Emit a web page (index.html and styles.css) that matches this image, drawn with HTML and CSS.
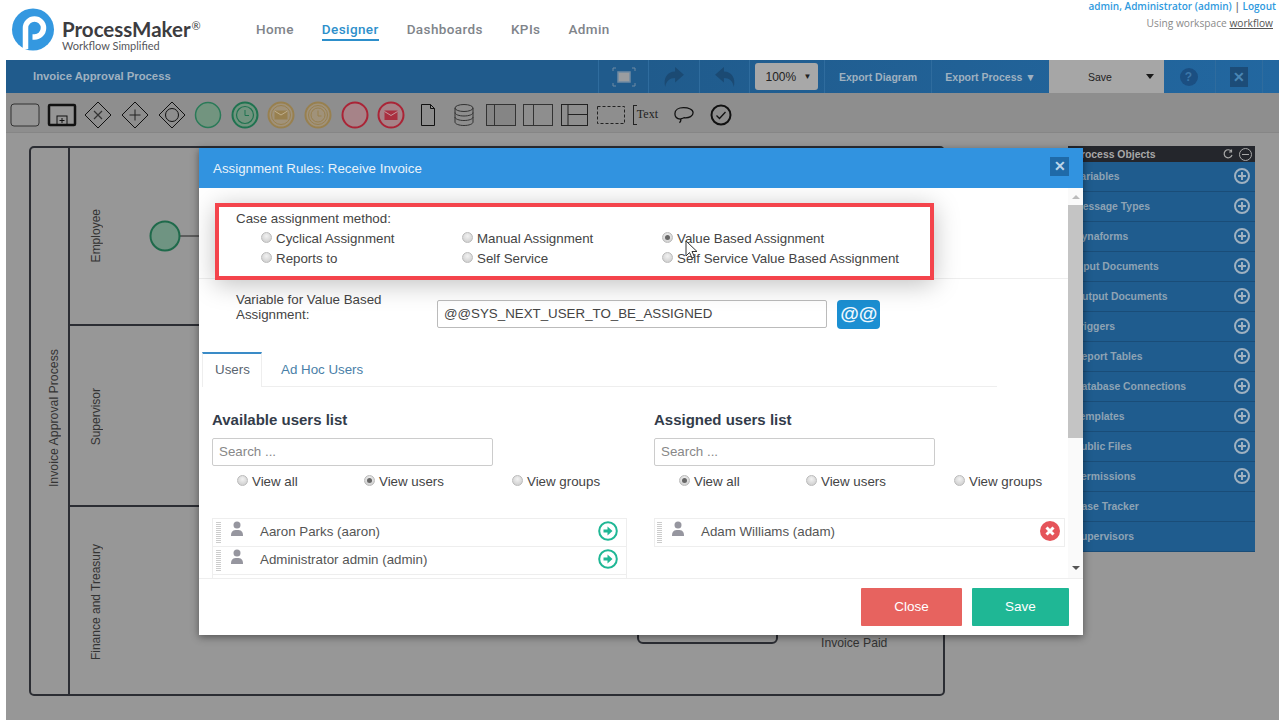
FILE: index.html
```html
<!DOCTYPE html>
<html lang="en">
<head>
<meta charset="utf-8">
<title>ProcessMaker Designer</title>
<link rel="stylesheet" href="styles.css">
</head>
<body>
<header class="topbar">
  <div class="brand">
    <svg class="logo" viewBox="0 0 44 46" width="44" height="46"><circle cx="22" cy="22.500" r="21" fill="#3498e0"/><path d="M14.500 42V21a9 9 0 1 1 9 9h-2" fill="none" stroke="#fff" stroke-width="5.500"/></svg>
    <div class="brand-text">
      <div class="brand-name">ProcessMaker<sup>®</sup></div>
      <div class="brand-tag">Workflow Simplified</div>
    </div>
  </div>
  <nav class="nav">
    <a class="nav-item">Home</a>
    <a class="nav-item active">Designer</a>
    <a class="nav-item">Dashboards</a>
    <a class="nav-item">KPIs</a>
    <a class="nav-item">Admin</a>
  </nav>
  <div class="account">
    <div class="account-user">admin, Administrator (admin) <span class="account-sep">|</span> Logout</div>
    <div class="account-ws">Using workspace <u>workflow</u></div>
  </div>
</header>

<main class="app">
  <div class="bluebar">
    <div class="process-title">Invoice Approval Process</div>
    <div class="bar-cell w50">
      <svg width="24" height="20" viewBox="0 0 24 20"><rect x="6" y="5" width="12" height="10" fill="#9a9da0" stroke="#6f8ba3" stroke-width="1.500"/><path d="M1 4V1h3M20 1h3v3M1 16v3h3M20 19h3v-3" fill="none" stroke="#6f8ba3"/></svg>
    </div>
    <div class="bar-cell w51">
      <svg width="22" height="22" viewBox="0 0 20 20"><path d="M11 1l8 7-8 7v-4C6 11 3 14 2 19 0 11 4 5 11 5z" fill="#1b4a73"/></svg>
    </div>
    <div class="bar-cell w50">
      <svg width="22" height="22" viewBox="0 0 20 20"><path d="M9 1L1 8l8 7v-4c5 0 8 3 9 8 2-8-2-14-9-14z" fill="#1b4a73"/></svg>
    </div>
    <div class="bar-cell w75"><div class="zoom-box"><span>100%</span><span class="zoom-caret">▼</span></div></div>
    <div class="bar-cell w107 bar-link">Export Diagram</div>
    <div class="bar-cell w118 bar-link">Export Process ▼</div>
    <div class="bar-save"><span>Save</span><i class="caret"></i></div>
    <div class="bar-cell w51 no-line"><span class="help">?</span></div>
    <div class="bar-cell w47"><span class="bar-x">✕</span></div>
    <div class="bar-cell bar-end"></div>
  </div>

  <div class="toolbar">
    <span class="tool"><svg width="30" height="24" viewBox="0 0 30 24"><rect x="1" y="1" width="28" height="22" rx="3" fill="#959595" stroke="#333"/></svg></span>
    <span class="tool"><svg width="30" height="24" viewBox="0 0 30 24"><rect x="2" y="2" width="26" height="20" rx="1" fill="#959595" stroke="#111" stroke-width="2.500"/><rect x="10" y="13" width="10" height="9" fill="none" stroke="#111"/><path d="M15 15v5M12.500 17.500h5" stroke="#111"/></svg></span>
    <span class="tool"><svg width="30" height="30" viewBox="0 0 30 30"><path d="M15 2l13 13-13 13L2 15z" fill="none" stroke="#111"/><path d="M11 11l8 8M19 11l-8 8" stroke="#333" stroke-width="1.200"/></svg></span>
    <span class="tool"><svg width="30" height="30" viewBox="0 0 30 30"><path d="M15 2l13 13-13 13L2 15z" fill="none" stroke="#111"/><path d="M15 9.500v11M9.500 15h11" stroke="#222"/></svg></span>
    <span class="tool"><svg width="30" height="30" viewBox="0 0 30 30"><path d="M15 2l13 13-13 13L2 15z" fill="none" stroke="#111"/><circle cx="15" cy="15" r="6.500" fill="none" stroke="#111"/></svg></span>
    <span class="tool"><svg width="28" height="28" viewBox="0 0 28 28"><circle cx="14" cy="14" r="12.500" fill="#72947f" stroke="#2a7a58" stroke-width="1.500"/></svg></span>
    <span class="tool"><svg width="28" height="28" viewBox="0 0 28 28"><circle cx="14" cy="14" r="12.500" fill="#72947f" stroke="#1f7350" stroke-width="2"/><circle cx="14" cy="14" r="8.500" fill="none" stroke="#1f7350" stroke-width="1.200"/><path d="M14 9v5.500h4" fill="none" stroke="#1f7350"/></svg></span>
    <span class="tool"><svg width="28" height="28" viewBox="0 0 28 28"><circle cx="14" cy="14" r="12.500" fill="#a0927a" stroke="#98804f" stroke-width="2"/><circle cx="14" cy="14" r="9.500" fill="none" stroke="#98804f"/><rect x="7.500" y="9.500" width="13" height="9" fill="#98804f"/><path d="M7.500 10l6.500 4 6.500-4" fill="none" stroke="#bfae8c"/></svg></span>
    <span class="tool"><svg width="28" height="28" viewBox="0 0 28 28"><circle cx="14" cy="14" r="12.500" fill="#a0927a" stroke="#98804f" stroke-width="2"/><circle cx="14" cy="14" r="9.500" fill="none" stroke="#98804f"/><circle cx="14" cy="14" r="7" fill="none" stroke="#98804f"/><path d="M14 9.500V15h3.500" fill="none" stroke="#98804f"/></svg></span>
    <span class="tool"><svg width="28" height="28" viewBox="0 0 28 28"><circle cx="14" cy="14" r="12.500" fill="#a68388" stroke="#aa2436" stroke-width="2"/></svg></span>
    <span class="tool"><svg width="28" height="28" viewBox="0 0 28 28"><circle cx="14" cy="14" r="12.500" fill="#a68388" stroke="#aa2436" stroke-width="2"/><rect x="7.500" y="9.500" width="13" height="9.500" fill="#aa2f40"/><path d="M7.500 10.500l6.500 4 6.500-4" fill="none" stroke="#c49aa0"/></svg></span>
    <span class="tool"><svg width="16" height="24" viewBox="0 0 16 24"><path d="M1.500 1.500h9l4 4v17h-13zM10.500 1.500v4h4" fill="none" stroke="#111"/></svg></span>
    <span class="tool"><svg width="20" height="24" viewBox="0 0 20 24"><path d="M1 5v14c0 2 4 3.500 9 3.500s9-1.500 9-3.500V5" fill="none" stroke="#333"/><ellipse cx="10" cy="5" rx="9" ry="3.500" fill="none" stroke="#333"/><path d="M1 9.500c0 2 4 3.500 9 3.500s9-1.500 9-3.500M1 14c0 2 4 3.500 9 3.500s9-1.500 9-3.500" fill="none" stroke="#333"/></svg></span>
    <span class="tool"><svg width="30" height="22" viewBox="0 0 30 22"><rect x=".5" y=".5" width="29" height="21" fill="#858585" stroke="#333"/><path d="M8.500 .5v21" stroke="#333"/></svg></span>
    <span class="tool"><svg width="30" height="22" viewBox="0 0 30 22"><rect x=".5" y=".5" width="29" height="21" fill="none" stroke="#333"/><path d="M10.500 .5v21" stroke="#333"/></svg></span>
    <span class="tool"><svg width="27" height="22" viewBox="0 0 27 22"><rect x=".5" y=".5" width="26" height="21" fill="none" stroke="#222"/><path d="M7 .5v21M7 10.500h19.500" stroke="#222"/></svg></span>
    <span class="tool"><svg width="28" height="18" viewBox="0 0 28 18"><rect x=".5" y=".5" width="27" height="17" fill="none" stroke="#222" stroke-dasharray="3 2"/></svg></span>
    <span class="tool tool-text"><i class="bracket"></i>Text</span>
    <span class="tool"><svg width="20" height="20" viewBox="0 0 22 20"><path d="M7 14.500C3 14 1 11.500 1 8.500 1 4.500 5 2 10.500 2S21 4 21 7.500 17 13.500 11 13c-2 1-3 1-4 1.500 1 1 .5 2.500-1 4" fill="none" stroke="#111" stroke-width="1.400"/></svg></span>
    <span class="tool"><svg width="22" height="22" viewBox="0 0 22 22"><circle cx="11" cy="11" r="9.500" fill="none" stroke="#111" stroke-width="2"/><path d="M6.500 11.500l3 3 6-6.500" fill="none" stroke="#111" stroke-width="1.300"/></svg></span>
  </div>

  <div class="canvas">
    <section class="pool">
      <div class="pool-title"><span class="vtext vtext-title">Invoice Approval Process</span></div>
      <div class="lanes">
        <div class="lane lane-a"><span class="vtext">Employee</span></div>
        <div class="lane lane-b"><span class="vtext">Supervisor</span></div>
        <div class="lane lane-c"><span class="vtext">Finance and Treasury</span></div>
      </div>
    </section>
    <svg class="start-event" width="60" height="34" viewBox="0 0 60 34"><path d="M32 17h28" stroke="#222"/><circle cx="17" cy="17" r="14.500" fill="#6f9482" stroke="#1f6a4b" stroke-width="2"/></svg>
    <div class="task-fragment"></div>
    <div class="event-label">Invoice Paid</div>

    <aside class="objects">
      <div class="objects-head"><span>Process Objects</span><span class="objects-tools"><svg width="10" height="10" viewBox="0 0 10 10"><path d="M8.500 2.500A4 4 0 1 0 9 6M8.500 .5v2.500H6" fill="none" stroke="#a8a8a8" stroke-width="1.200"/></svg><i class="minus"></i></span></div>
      <div class="obj-row"><span>Variables</span><i class="plus"></i></div>
      <div class="obj-row"><span>Message Types</span><i class="plus"></i></div>
      <div class="obj-row"><span>Dynaforms</span><i class="plus"></i></div>
      <div class="obj-row"><span>Input Documents</span><i class="plus"></i></div>
      <div class="obj-row"><span>Output Documents</span><i class="plus"></i></div>
      <div class="obj-row"><span>Triggers</span><i class="plus"></i></div>
      <div class="obj-row"><span>Report Tables</span><i class="plus"></i></div>
      <div class="obj-row"><span>Database Connections</span><i class="plus"></i></div>
      <div class="obj-row"><span>Templates</span><i class="plus"></i></div>
      <div class="obj-row"><span>Public Files</span><i class="plus"></i></div>
      <div class="obj-row"><span>Permissions</span><i class="plus"></i></div>
      <div class="obj-row"><span>Case Tracker</span></div>
      <div class="obj-row"><span>Supervisors</span></div>
    </aside>
  </div>
</main>

<div class="modal">
  <div class="modal-head">
    <span>Assignment Rules: Receive Invoice</span>
    <span class="modal-x">✕</span>
  </div>
  <div class="modal-body">
    <div class="modal-scroll">
      <div class="method-section">
        <div class="method-box">
          <div class="method-title">Case assignment method:</div>
          <div class="method-grid">
            <label class="opt"><input type="radio" name="m">Cyclical Assignment</label>
            <label class="opt"><input type="radio" name="m">Manual Assignment</label>
            <label class="opt"><input type="radio" name="m" checked>Value Based Assignment</label>
            <label class="opt"><input type="radio" name="m">Reports to</label>
            <label class="opt"><input type="radio" name="m">Self Service</label>
            <label class="opt"><input type="radio" name="m">Self Service Value Based Assignment</label>
          </div>
        </div>
      </div>
      <div class="variable-row">
        <div class="variable-label">Variable for Value Based Assignment:</div>
        <div class="variable-input">@@SYS_NEXT_USER_TO_BE_ASSIGNED</div>
        <div class="at-btn">@@</div>
      </div>
      <div class="tabs">
        <div class="tab active">Users</div>
        <div class="tab">Ad Hoc Users</div>
      </div>
      <div class="lists">
        <div class="list-col">
          <h3 class="list-title">Available users list</h3>
          <div class="search">Search ...</div>
          <div class="view-grid">
            <label class="opt"><input type="radio" name="a">View all</label>
            <label class="opt"><input type="radio" name="a" checked>View users</label>
            <label class="opt"><input type="radio" name="a">View groups</label>
          </div>
          <div class="user-list">
            <div class="user-row"><i class="grip"></i><svg class="user-ico" width="14" height="15" viewBox="0 0 14 15"><circle cx="7" cy="4" r="3.500" fill="#96969f"/><path d="M1 15c0-5 2-6 6-6s6 1 6 6z" fill="#96969f"/></svg><span class="user-name">Aaron Parks (aaron)</span><svg class="act" width="20" height="20" viewBox="0 0 20 20"><circle cx="10" cy="10" r="8.800" fill="#fff" stroke="#1fb795" stroke-width="2"/><path d="M5.500 8.500h4V5.500l5 4.500-5 4.500v-3h-4z" fill="#1fb795"/></svg></div>
            <div class="user-row"><i class="grip"></i><svg class="user-ico" width="14" height="15" viewBox="0 0 14 15"><circle cx="7" cy="4" r="3.500" fill="#96969f"/><path d="M1 15c0-5 2-6 6-6s6 1 6 6z" fill="#96969f"/></svg><span class="user-name">Administrator admin (admin)</span><svg class="act" width="20" height="20" viewBox="0 0 20 20"><circle cx="10" cy="10" r="8.800" fill="#fff" stroke="#1fb795" stroke-width="2"/><path d="M5.500 8.500h4V5.500l5 4.500-5 4.500v-3h-4z" fill="#1fb795"/></svg></div>
            <div class="user-row"></div>
          </div>
        </div>
        <div class="list-col list-col-b">
          <h3 class="list-title">Assigned users list</h3>
          <div class="search">Search ...</div>
          <div class="view-grid">
            <label class="opt"><input type="radio" name="b" checked>View all</label>
            <label class="opt"><input type="radio" name="b">View users</label>
            <label class="opt"><input type="radio" name="b">View groups</label>
          </div>
          <div class="user-list">
            <div class="user-row"><i class="grip"></i><svg class="user-ico" width="14" height="15" viewBox="0 0 14 15"><circle cx="7" cy="4" r="3.500" fill="#96969f"/><path d="M1 15c0-5 2-6 6-6s6 1 6 6z" fill="#96969f"/></svg><span class="user-name">Adam Williams (adam)</span><svg class="act" width="20" height="20" viewBox="0 0 20 20"><circle cx="10" cy="10" r="10" fill="#e5545a"/><path d="M6.500 6.500l7 7M13.500 6.500l-7 7" stroke="#fff" stroke-width="3"/></svg></div>
          </div>
        </div>
      </div>
    </div>
    <div class="scrollbar">
      <i class="sb-up"></i>
      <div class="sb-thumb"></div>
      <i class="sb-down"></i>
    </div>
  </div>
  <div class="modal-foot">
    <div class="btn btn-close">Close</div>
    <div class="btn btn-save">Save</div>
  </div>
</div>

<svg class="cursor" width="14" height="20" viewBox="0 0 14 20"><path d="M1 1v15l3.500-3.500L7 18l2.500-1-2.500-5.500h5z" fill="#fff" stroke="#333"/></svg>
</body>
</html>
```
FILE: styles.css
```css
* { box-sizing: border-box; }
html, body { margin: 0; height: 720px; overflow: hidden; }
body { width: 1280px; position: relative; background: #fff; font-family: "Liberation Sans", Arial, sans-serif; color: #444; }

/* top header */
.topbar { height: 60px; display: flex; align-items: flex-start; }
.brand { width: 256px; padding: 7px 0 0 11px; display: flex; }
.logo { flex: none; }
.brand-text { margin-left: 7px; padding-top: 11px; }
.brand-name { font-family: Lato, sans-serif; font-size: 20.500px; line-height: 22px; font-weight: 700; color: #3c3c40; white-space: nowrap; }
.brand-name sup { font-size: 11px; line-height: 0; vertical-align: 7px; font-weight: 400; margin-left: 1px; }
.brand-tag { font-family: Lato, sans-serif; font-size: 11px; line-height: 13px; color: #55565a; margin: -1px 0 0 0; }
.nav { display: flex; gap: 28px; padding-top: 19px; font-family: Roboto, sans-serif; font-size: 13.500px; font-weight: 500; letter-spacing: .4px; color: #80848a; }
.nav-item { height: 22px; line-height: 20px; }
.nav-item.active { color: #2d8fcb; border-bottom: 2px solid #2d8fcb; }
.account { margin-left: auto; padding: 0 4px 0 0; text-align: right; font-family: "Open Sans", sans-serif; font-size: 10px; }
.account-user { color: #2f9ade; font-weight: 600; line-height: 13px; }
.account-sep { color: #666; }
.account-ws { color: #8a8a8a; font-size: 10.200px; line-height: 14px; margin-top: 3px; padding-right: 3px; }
.account-ws u { color: #555; }

/* blue bar */
.app { margin-left: 6px; width: 1273px; height: 660px; display: flex; flex-direction: column; background: #979797; }
.bluebar { height: 33px; flex: none; display: flex; align-items: stretch; background: linear-gradient(90deg, #205b8c 0 50%, #2267a0 100%); color: #9fb1c0; font-size: 10.500px; font-weight: 700; }
.process-title { width: 592px; padding-left: 27px; line-height: 33px; font-size: 11.300px; flex: none; }
.bar-cell { display: flex; align-items: center; justify-content: center; border-left: 1px solid #2f6c9e; flex: none; }
.w47 { width: 47px; } .w50 { width: 50px; } .w51 { width: 51px; } .w75 { width: 75px; } .w107 { width: 107px; } .w118 { width: 118px; }
.no-line { border-left: 0; }
.bar-end { flex: 1; }
.zoom-box { width: 63px; height: 27px; margin-left: -2px; background: #a8a8a8; border-radius: 3px; display: flex; align-items: center; justify-content: space-between; padding: 0 6px 0 11px; font-weight: 400; font-size: 12px; color: #222; }
.zoom-caret { font-size: 8px; }
.bar-save { width: 115px; flex: none; background: #a6a6a6; color: #222; display: flex; align-items: center; padding-left: 39px; font-weight: 400; }
.caret { margin-left: 34px; border: 4px solid transparent; border-top: 5px solid #1a1a1a; border-bottom: 0; width: 0; height: 0; }
.help { width: 18px; height: 18px; margin-right: 2px; border-radius: 50%; background: #1b4f82; color: #3c76a8; text-align: center; line-height: 18px; font-size: 12px; }
.bar-x { width: 18px; height: 20px; background: #1c4c78; color: #4a86b4; text-align: center; line-height: 20px; font-size: 14px; }

/* tools */
.toolbar { height: 40px; flex: none; display: flex; align-items: center; background: #8e8e8e; border-bottom: 1px solid #868686; padding: 4px 0 0 1px; }
.tool { width: 36.600px; flex: none; display: flex; align-items: center; justify-content: center; }
.tool-text { font-family: "Liberation Serif", serif; font-size: 12px; color: #222; margin-left: -2px; margin-right: 2px; }
.bracket { width: 4px; height: 20px; border: 1px solid #222; border-right: 0; flex: none; }

/* canvas */
.canvas { flex: 1; position: relative; overflow: hidden; }
.pool { position: absolute; left: 23px; top: 13px; width: 916px; height: 550px; display: flex; border: 2px solid #2b2d33; border-radius: 5px; }
.pool-title { width: 39px; border-right: 2px solid #2b2d33; display: flex; align-items: center; justify-content: center; padding: 0 0 6px 8px; }
.lanes { flex: 1; display: flex; flex-direction: column; }
.lane { display: flex; align-items: center; padding-left: 19px; }
.lane-a { height: 178px; border-bottom: 2px solid #2b2d33; }
.lane-b { height: 181px; border-bottom: 2px solid #2b2d33; padding-top: 2px; }
.lane-c { flex: 1; padding-top: 4px; }
.vtext { writing-mode: vertical-rl; transform: rotate(180deg); font-size: 12px; color: #333; white-space: nowrap; }
.vtext-title { font-size: 12.300px; }
.start-event { position: absolute; left: 142px; top: 86px; }
.task-fragment { position: absolute; left: 631px; top: 490px; width: 141px; height: 21px; border: 2px solid #2b2d33; border-radius: 6px; }
.event-label { position: absolute; left: 815px; top: 503px; font-size: 12.200px; line-height: 14px; color: #333; }

/* process objects */
.objects { position: absolute; left: 1062px; top: 13px; width: 187px; background: #1f5c8e; color: #8ea3b4; font-size: 10.400px; font-weight: 700; }
.objects-head { height: 16px; background: #24262c; padding: 0 3px 0 6px; display: flex; align-items: center; justify-content: space-between; color: #a8a8a8; }
.objects-tools { display: flex; align-items: center; gap: 6px; }
.minus { width: 13px; height: 13px; border: 1px solid #a8a8a8; border-radius: 50%; position: relative; display: block; }
.minus::before { content: ""; position: absolute; left: 2px; right: 2px; top: 5px; height: 1px; background: #a8a8a8; }
.obj-row { height: 30px; padding: 0 5px 0 6px; display: flex; align-items: center; justify-content: space-between; border-bottom: 1px solid #1a4d78; }
.obj-row span { margin-top: -1px; }
.plus { width: 16px; height: 16px; margin-top: -1px; border: 2px solid #9fb1c0; border-radius: 50%; position: relative; display: block; }
.plus::before { content: ""; position: absolute; left: 2px; right: 2px; top: 5px; height: 2px; background: #9fb1c0; }
.plus::after { content: ""; position: absolute; top: 2px; bottom: 2px; left: 5px; width: 2px; background: #9fb1c0; }

/* modal */
.modal { position: absolute; left: 199px; top: 148px; width: 884px; height: 487px; background: #fff; display: flex; flex-direction: column; box-shadow: 0 2px 8px rgba(0,0,0,.45); }
.modal-head { height: 40px; flex: none; background: #3193e0; color: #e8f2fa; font-size: 13.330px; padding: 0 14px; display: flex; align-items: center; justify-content: space-between; }
.modal-x { width: 19px; height: 19px; margin-top: -3px; background: #1f6aa8; color: #bcd6ea; text-align: center; line-height: 19px; font-size: 14px; font-weight: 700; }
.modal-body { height: 390px; flex: none; display: flex; overflow: hidden; }
.modal-scroll { width: 869px; flex: none; overflow: hidden; font-size: 13.330px; }
.method-section { height: 91px; padding: 15px 0 0 16px; border-bottom: 1px solid #eee; }
.method-box { position: relative; width: 719px; height: 77px; padding: 4px 0 0 17px; border: 4px solid #f4444c; background: #fff; box-shadow: 0 4px 24px rgba(0,0,0,.25); }
.method-title { line-height: 16px; height: 17px; }
.method-grid { display: grid; grid-template-columns: 201px 200px 1fr; grid-auto-rows: 20px; padding-left: 25px; }
.opt { display: flex; align-items: center; gap: 4px; white-space: nowrap; color: #444; }
.opt input { appearance: none; -webkit-appearance: none; width: 11px; height: 11px; margin: -2px 0 0; flex: none; border-radius: 50%; border: 1px solid #bbb; background: radial-gradient(circle at 50% 35%, #f2f2f2, #c8c8c8); position: relative; }
.opt input:checked::after { content: ""; position: absolute; inset: 2px; border-radius: 50%; background: #666; }
.variable-row { height: 73px; padding: 12px 0 0 37px; display: flex; align-items: flex-start; }
.variable-label { width: 201px; margin-top: 1px; line-height: 15px; flex: none; padding-right: 30px; }
.variable-input { width: 390px; height: 28px; margin-top: 9px; border: 1px solid #bbb; border-radius: 2px; padding-left: 6px; line-height: 26px; flex: none; }
.at-btn { width: 43px; height: 29px; margin: 9px 0 0 10px; background: #1b8fd2; border-radius: 4px; color: #eef8fe; font-size: 19px; font-weight: 700; font-style: italic; text-align: center; line-height: 28px; flex: none; }
.tabs { margin-left: 3px; width: 795px; height: 35px; display: flex; border-bottom: 1px solid #eee; }
.tab { height: 35px; padding: 10px 19px 0 19px; line-height: 16px; color: #4a7fa8; }
.tab.active { width: 60px; padding: 8px 0 0 12px; color: #5a6570; background: #fff; border: 1px solid #eee; border-top: 2px solid #3a8bc7; border-bottom: 0; }
.lists { display: flex; padding-left: 13px; gap: 27px; }
.list-col { width: 415px; flex: none; }
.list-col-b { width: 411px; }
.list-title { margin: 23px 0 8px; font-size: 15px; line-height: 20px; font-weight: 700; color: #333c4a; }
.search { width: 281px; height: 28px; border: 1px solid #ccc; border-radius: 2px; padding-left: 6px; line-height: 26px; color: #888; }
.view-grid { display: grid; grid-template-columns: 127px 148px 1fr; height: 20px; margin: 5px 0 27px; padding-left: 25px; }
.user-list { border-top: 1px solid #eee; }
.user-row { height: 28px; display: flex; align-items: center; border: 1px solid #eee; border-top: 0; }
.grip { width: 5px; height: 21px; margin-left: 3px; flex: none; background: repeating-linear-gradient(0deg, #ccc 0 1px, transparent 1px 2px); }
.user-ico { margin: -9px 0 0 9px; flex: none; }
.user-name { margin: -3px 0 0 16px; color: #555; }
.act { margin: -4px 8px 0 auto; flex: none; }
.list-col-b .grip { margin-left: 2px; }
.list-col-b .act { margin-right: 4px; }

/* scrollbar */
.scrollbar { width: 15px; flex: none; display: flex; flex-direction: column; align-items: center; background: #fafafa; }
.sb-up { margin-top: 7px; border: 4px solid transparent; border-bottom: 4px solid #bbb; border-top: 0; width: 0; height: 0; }
.sb-thumb { margin-top: 6px; width: 15px; height: 233px; background: #c4c4c4; }
.sb-down { margin-top: 128px; border: 4px solid transparent; border-top: 4px solid #555; border-bottom: 0; width: 0; height: 0; }

/* footer */
.modal-foot { height: 57px; flex: none; border-top: 1px solid #eee; display: flex; justify-content: flex-end; gap: 10px; padding: 9px 14px 0 0; }
.btn { height: 38px; color: #fff; font-size: 13.500px; text-align: center; line-height: 38px; border-radius: 1px; }
.btn-close { width: 101px; background: #e7635f; }
.btn-save { width: 97px; background: #1fb795; }

.cursor { position: absolute; left: 685px; top: 240px; }
```
